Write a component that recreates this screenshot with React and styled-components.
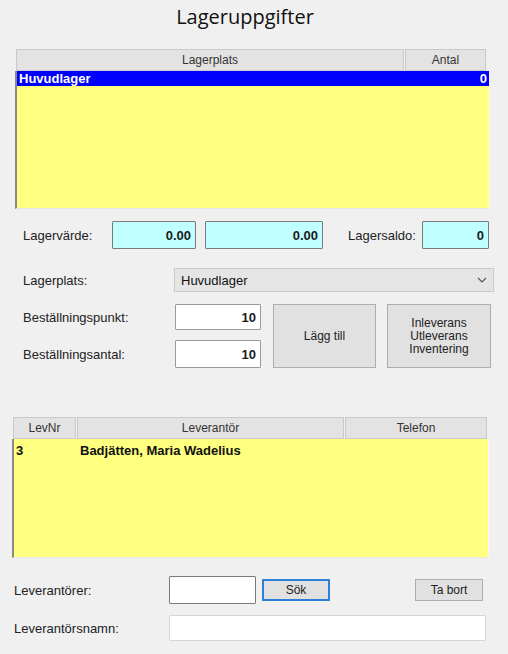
import React from "react";
import styled, { createGlobalStyle } from "styled-components";

const Global = createGlobalStyle`
  html, body { margin: 0; padding: 0; background: #f0f0f0; }
  body { font-family: "Liberation Sans", Arial, sans-serif; font-size: 13px; color: #1a1a1a; }
`;

const Window = styled.div`
  width: 508px;
  height: 654px;
  background: #f0f0f0;
  display: flex;
  flex-direction: column;
  overflow: hidden;
`;

const Title = styled.h1`
  margin: 0;
  height: 49px;
  padding-top: 3px;
  box-sizing: border-box;
  text-align: center;
  font-family: "Open Sans", "Liberation Sans", sans-serif;
  font-weight: 400;
  font-size: 20px;
  line-height: 28px;
  color: #111;
  padding-right: 18px;
`;

const Table = styled.div`
  margin-left: ${(p) => p.$left}px;
  width: ${(p) => p.$width}px;
  display: flex;
  flex-direction: column;
`;

const HeaderRow = styled.div`
  display: grid;
  grid-template-columns: ${(p) => p.$cols};
  height: 22px;
  padding-right: 2px;
  margin-left: 1px;
`;

const HeaderCell = styled.div`
  background: #e3e3e3;
  border: 1px solid #c9c9c9;
  margin-right: 1px;
  display: flex;
  align-items: center;
  justify-content: center;
  font-size: 12px;
  color: #333;
`;

const ListBody = styled.div`
  height: ${(p) => p.$height}px;
  background: #ffff80;
  border-left: 2px solid #8a8a8a;
  border-right: 1px solid #f6f6f6;
  border-bottom: 1px solid #e6e6e6;
  display: flex;
  flex-direction: column;
`;

const ListRow = styled.div`
  display: grid;
  grid-template-columns: ${(p) => p.$cols};
  height: 15px;
  align-items: center;
  background: ${(p) => (p.$selected ? "#0000ff" : "transparent")};
  color: ${(p) => (p.$selected ? "#ffffff" : "#111")};
  font-weight: 700;
  font-size: 13px;
  padding: 0 2px;
`;

const Num = styled.span`
  text-align: right;
`;

const FormRow = styled.div`
  display: flex;
  align-items: center;
  height: ${(p) => p.$height}px;
  margin-top: ${(p) => p.$top}px;
  padding-left: ${(p) => p.$left || 23}px;
`;

const Label = styled.span`
  width: ${(p) => (p.$width ? `${p.$width}px` : "auto")};
  flex: none;
  font-size: 13px;
  color: #222;
`;

const ValueBox = styled.div`
  width: ${(p) => p.$width}px;
  height: 100%;
  box-sizing: border-box;
  background: ${(p) => (p.$cyan ? "#bfffff" : "#ffffff")};
  border: 1px solid ${(p) => (p.$dark ? "#7a7a7a" : "#9a9a9a")};
  border-radius: 1px;
  display: flex;
  align-items: center;
  justify-content: flex-end;
  padding-right: 4px;
  margin-left: ${(p) => p.$gap || 0}px;
  font-weight: 700;
  font-size: 13px;
  color: #1a1a1a;
`;

const Select = styled.div`
  width: 320px;
  height: 100%;
  box-sizing: border-box;
  background: #e5e5e5;
  border: 1px solid #c9c9c9;
  display: flex;
  align-items: center;
  justify-content: space-between;
  padding: 0 6px 0 6px;
  font-size: 13px;
  color: #111;
`;

const OrderArea = styled.div`
  display: flex;
  margin-top: 12px;
  padding-left: 23px;
  height: 64px;
`;

const OrderFields = styled.div`
  display: grid;
  grid-template-columns: 152px 86px;
  grid-template-rows: 26px 28px;
  row-gap: 10px;
  align-items: center;
`;

const OrderInput = styled(ValueBox)`
  height: 100%;
`;

const BigButton = styled.div`
  width: ${(p) => p.$width}px;
  height: 64px;
  box-sizing: border-box;
  margin-left: ${(p) => p.$gap}px;
  background: #e1e1e1;
  border: 1px solid #adadad;
  display: flex;
  align-items: center;
  justify-content: center;
  text-align: center;
  font-size: 12px;
  line-height: 13px;
  color: #222;
`;

const SmallButton = styled.div`
  width: ${(p) => p.$width}px;
  height: 22px;
  box-sizing: border-box;
  margin-left: ${(p) => p.$gap}px;
  background: #e1e1e1;
  border: ${(p) => (p.$focused ? "2px solid #2b7fd6" : "1px solid #adadad")};
  display: flex;
  align-items: center;
  justify-content: center;
  font-size: 12px;
  color: #222;
`;

const Chevron = () => (
  <svg width="10" height="6" viewBox="0 0 10 6">
    <path d="M1 1l4 4 4-4" fill="none" stroke="#555" strokeWidth="1.2" />
  </svg>
);

export default function App() {
  return (
    <Window>
      <Global />
      <Title>Lageruppgifter</Title>

      <Table $left={15} $width={475}>
        <HeaderRow $cols="389px 82px">
          <HeaderCell>Lagerplats</HeaderCell>
          <HeaderCell>Antal</HeaderCell>
        </HeaderRow>
        <ListBody $height={137}>
          <ListRow $cols="1fr 60px" $selected>
            <span>Huvudlager</span>
            <Num>0</Num>
          </ListRow>
        </ListBody>
      </Table>

      <FormRow $height={28} $top={12}>
        <Label $width={89}>Lagervärde:</Label>
        <ValueBox $width={84} $cyan $dark>0.00</ValueBox>
        <ValueBox $width={118} $cyan $dark $gap={9}>0.00</ValueBox>
        <Label style={{ marginLeft: 25 }}>Lagersaldo:</Label>
        <ValueBox $width={67} $cyan $dark $gap={6}>0</ValueBox>
      </FormRow>

      <FormRow $height={24} $top={19}>
        <Label $width={151}>Lagerplats:</Label>
        <Select>
          <span>Huvudlager</span>
          <Chevron />
        </Select>
      </FormRow>

      <OrderArea>
        <OrderFields>
          <Label>Beställningspunkt:</Label>
          <OrderInput $width={86}>10</OrderInput>
          <Label>Beställningsantal:</Label>
          <OrderInput $width={86}>10</OrderInput>
        </OrderFields>
        <BigButton $width={103} $gap={12}>Lägg till</BigButton>
        <BigButton $width={104} $gap={11}>
          Inleverans
          <br />
          Utleverans
          <br />
          Inventering
        </BigButton>
      </OrderArea>

      <div style={{ height: 49 }} />

      <Table $left={12} $width={477}>
        <HeaderRow $cols="64px 268px 143px">
          <HeaderCell>LevNr</HeaderCell>
          <HeaderCell>Leverantör</HeaderCell>
          <HeaderCell>Telefon</HeaderCell>
        </HeaderRow>
        <ListBody $height={118}>
          <ListRow $cols="64px 1fr" style={{ marginTop: 4 }}>
            <span>3</span>
            <span>Badjätten, Maria Wadelius</span>
          </ListRow>
        </ListBody>
      </Table>

      <FormRow $height={28} $top={18} $left={14}>
        <Label $width={155}>Leverantörer:</Label>
        <ValueBox $width={87} $dark />
        <SmallButton $width={68} $gap={6} $focused>Sök</SmallButton>
        <SmallButton $width={68} $gap={85}>Ta bort</SmallButton>
      </FormRow>

      <FormRow $height={26} $top={11} $left={14}>
        <Label $width={155}>Leverantörsnamn:</Label>
        <ValueBox $width={317} style={{ borderColor: "#d6d6d6" }} />
      </FormRow>
    </Window>
  );
}
